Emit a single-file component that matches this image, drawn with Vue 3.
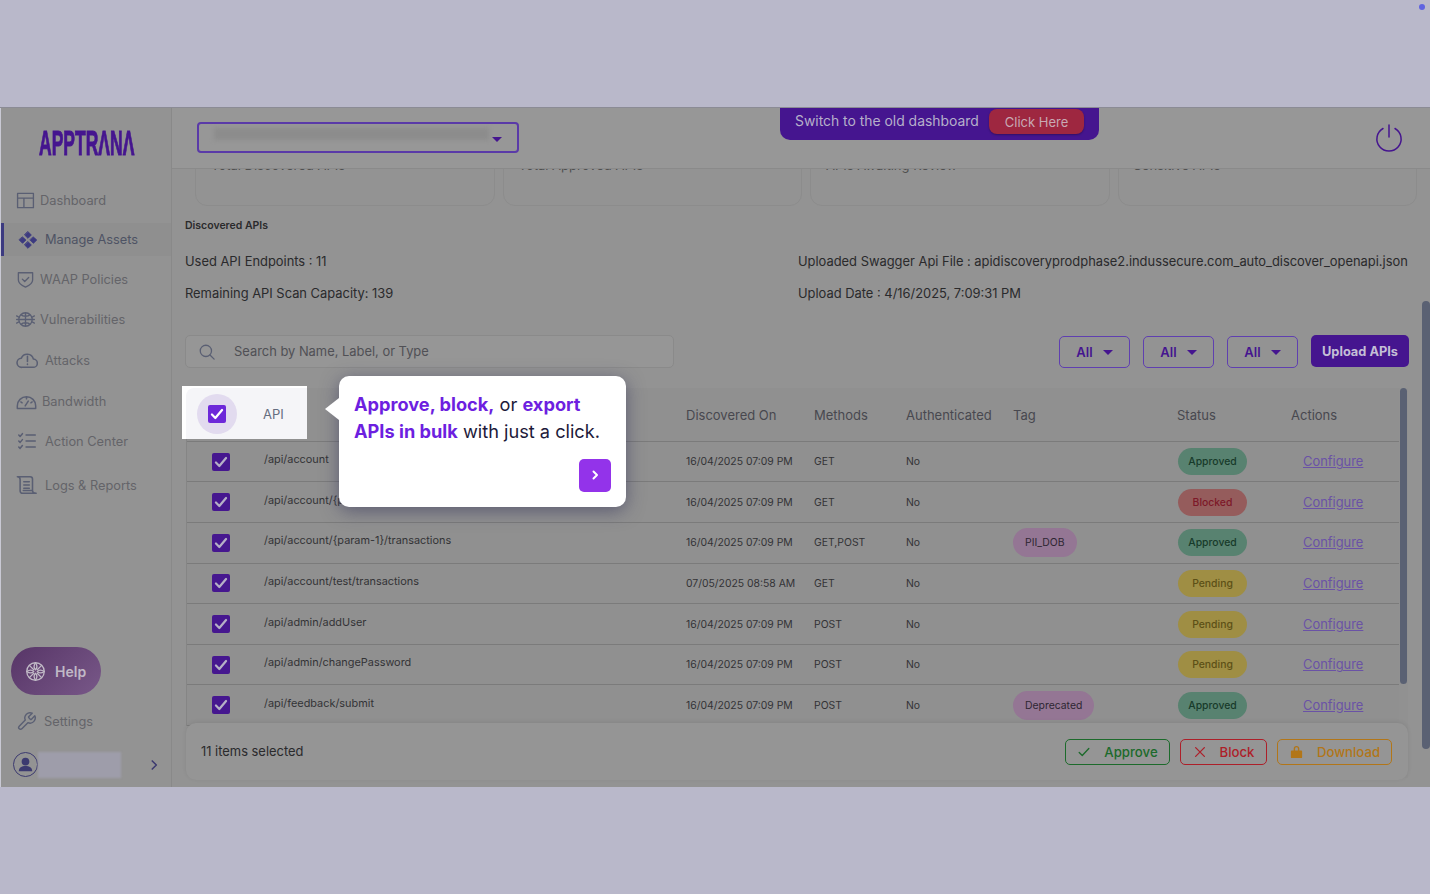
<template>
  <div class="page">
    <span class="dot"></span>
    <div class="band band-top"></div>

    <div class="app">
      <aside class="sidebar">
        <div class="logo" aria-label="APPTRANA">APPTR<span>Λ</span>N<span>Λ</span></div>

        <nav class="nav">
          <a v-for="item in navItems" :key="item.label" class="nav-item" :class="item.cls">
            <svg class="nav-icon" viewBox="0 0 24 24" fill="none" stroke="currentColor" stroke-width="1.7" stroke-linecap="round" stroke-linejoin="round">
              <path :d="item.icon" />
            </svg>
            {{ item.label }}
          </a>
        </nav>

        <button class="help">
          <svg viewBox="0 0 24 24" fill="none" stroke="currentColor" stroke-width="1.5" stroke-linecap="round" stroke-linejoin="round">
            <circle cx="12" cy="12" r="10" />
            <path d="M12 2c-2 3-2 6 0 8 2-2 2-5 0-8zM2 12c3-2 6-2 8 0-2 2-5 2-8 0zM22 12c-3-2-6-2-8 0 2 2 5 2 8 0zM12 22c-2-3-2-6 0-8 2 2 2 5 0 8z" />
            <path d="M5 5l5 5M19 5l-5 5M5 19l5-5M19 19l-5-5" />
          </svg>
          Help
        </button>

        <a class="settings">
          <svg viewBox="0 0 24 24" fill="none" stroke="currentColor" stroke-width="1.6" stroke-linecap="round" stroke-linejoin="round">
            <path d="M14.7 6.3a1 1 0 0 0 0 1.4l1.6 1.6a1 1 0 0 0 1.4 0l3.8-3.8a6 6 0 0 1-7.9 7.9l-6.9 6.9a2.1 2.1 0 0 1-3-3l6.9-6.9a6 6 0 0 1 7.9-7.9z" />
          </svg>
          Settings
        </a>

        <div class="profile">
          <span class="avatar">
            <svg viewBox="0 0 24 24" fill="currentColor">
              <circle cx="12" cy="9" r="4" />
              <path d="M5 19c0-4 3-5.5 7-5.5s7 1.5 7 5.5z" />
            </svg>
          </span>
          <span class="profile-name"></span>
          <svg class="profile-arrow" viewBox="0 0 24 24" fill="none" stroke="currentColor" stroke-width="2.6" stroke-linecap="round" stroke-linejoin="round">
            <path d="M9 5l7 7-7 7" />
          </svg>
        </div>
      </aside>

      <div class="right">
        <header class="topbar">
          <div class="org-select">
            <span class="blurred"></span>
            <span class="caret"></span>
          </div>
          <div class="old-banner">
            <span>Switch to the old dashboard</span>
            <button class="click-here">Click Here</button>
          </div>
          <svg class="power" viewBox="0 0 28 28" fill="none" stroke="currentColor" stroke-width="1.5" stroke-linecap="round">
            <path d="M14 1v12" />
            <path d="M8 4.500a12.100 12.100 0 1 0 12 0" />
          </svg>
        </header>

        <main class="main">
          <div class="cards">
            <div v-for="c in cards" :key="c" class="card"><span>{{ c }}</span></div>
          </div>

          <h4 class="section-title">Discovered APIs</h4>

          <div class="info">
            <span>Used API Endpoints : 11</span>
            <span>Uploaded Swagger Api File : apidiscoveryprodphase2.indussecure.com_auto_discover_openapi.json</span>
            <span>Remaining API Scan Capacity: 139</span>
            <span>Upload Date : 4/16/2025, 7:09:31 PM</span>
          </div>

          <div class="toolbar">
            <div class="search">
              <svg viewBox="0 0 24 24" fill="none" stroke="currentColor" stroke-width="1.7" stroke-linecap="round">
                <circle cx="10.5" cy="10.5" r="7.5" />
                <path d="M16 16l5.5 5.5" />
              </svg>
              Search by Name, Label, or Type
            </div>
            <div class="filters">
              <button v-for="n in 3" :key="n" class="filter">All <span class="caret"></span></button>
              <button class="upload">Upload APIs</button>
            </div>
          </div>

          <div class="table">
            <div class="row head">
              <span></span>
              <span></span>
              <span>Discovered On</span>
              <span>Methods</span>
              <span>Authenticated</span>
              <span>Tag</span>
              <span>Status</span>
              <span>Actions</span>
            </div>
            <div v-for="r in rows" :key="r.api" class="row">
              <span class="check dim">
                <svg viewBox="0 0 16 16" fill="none" stroke="currentColor" stroke-width="2" stroke-linecap="round" stroke-linejoin="round"><path d="M3.5 8.5l3 3 6-7" /></svg>
              </span>
              <span class="api">{{ r.api }}</span>
              <span>{{ r.date }}</span>
              <span>{{ r.method }}</span>
              <span>No</span>
              <span><em v-if="r.tag" class="tag">{{ r.tag }}</em></span>
              <span><em class="status" :class="r.status.toLowerCase()">{{ r.status }}</em></span>
              <span><a class="configure">Configure</a></span>
            </div>

            <div class="inner-track"><div class="inner-thumb"></div></div>

            <!-- tour spotlight over the first header cell -->
            <div class="spotlight">
              <div class="spot-inner">
                <span class="halo">
                  <span class="check">
                    <svg viewBox="0 0 16 16" fill="none" stroke="currentColor" stroke-width="2" stroke-linecap="round" stroke-linejoin="round"><path d="M3.5 8.5l3 3 6-7" /></svg>
                  </span>
                </span>
                <span class="spot-label">API</span>
              </div>
            </div>

            <div class="popover">
              <p><b>Approve, block,</b> or <b>export APIs in bulk</b> with just a click.</p>
              <button class="next">
                <svg viewBox="0 0 12 12" fill="none" stroke="currentColor" stroke-width="2" stroke-linecap="round" stroke-linejoin="round"><path d="M4.5 2.5L8 6l-3.5 3.5" /></svg>
              </button>
            </div>
          </div>

          <div class="bulk-bar">
            <span>11 items selected</span>
            <div class="bulk-actions">
              <button class="bulk approve">
                <svg viewBox="0 0 16 16" fill="none" stroke="currentColor" stroke-width="1.5" stroke-linecap="round" stroke-linejoin="round"><path d="M2.5 8.5l3.5 3.5 7.5-8" /></svg>
                Approve
              </button>
              <button class="bulk block">
                <svg viewBox="0 0 16 16" fill="none" stroke="currentColor" stroke-width="1.5" stroke-linecap="round"><path d="M3 3l10 10M13 3L3 13" /></svg>
                Block
              </button>
              <button class="bulk download">
                <svg viewBox="0 0 16 16" fill="currentColor"><path d="M3 7h10a1 1 0 0 1 1 1v6a1 1 0 0 1-1 1H3a1 1 0 0 1-1-1V8a1 1 0 0 1 1-1zm2 0V5a3 3 0 0 1 6 0v2H9.5V5a1.5 1.5 0 0 0-3 0v2z" /></svg>
                Download
              </button>
            </div>
          </div>

          <div class="outer-thumb"></div>
        </main>
      </div>
    </div>

    <div class="band band-bottom"></div>
  </div>
</template>

<script setup>
const navItems = [
  { label: 'Dashboard', cls: 'narrow', icon: 'M2 3h20v18H2zM2 9h20M10 9v12' },
  { label: 'Manage Assets', cls: 'active', icon: 'M12 2l4 4-4 4-4-4zM5.5 8.5l4 3.5-4 4-4-4zM18.5 8.5l4 3.5-4 4-4-4zM12 14l4 4-4 4-4-4z' },
  { label: 'WAAP Policies', cls: 'narrow', icon: 'M3 3.5c6 0 12 0 18 0v9c0 4.5-4.5 7-9 9-4.5-2-9-4.5-9-9zM8 11.5l3 3 5-5' },
  { label: 'Vulnerabilities', cls: 'narrow', icon: 'M12 3.5a8.5 8.5 0 0 1 8.5 8.5 8.5 8.5 0 0 1-17 0 8.5 8.5 0 0 1 8.5-8.5zM3.5 12h17M12 3.5v17M6.5 6c2 2.5 9 2.5 11 0M6.5 18c2-2.5 9-2.5 11 0M.8 7.5l3.5 2M23.2 7.5l-3.5 2M.8 16.5l3.5-2M23.2 16.5l-3.5-2M.8 12h2.7M20.5 12h2.7' },
  { label: 'Attacks', cls: 'wide attacks', icon: 'M6.5 20a5 5 0 0 1-.7-10 7 7 0 0 1 13.2 1 4.500 4.500 0 0 1-.5 9zM12.500 8v5.500M12.500 16.500v.3' },
  { label: 'Bandwidth', cls: 'mid', icon: 'M1.5 20v-3a10.500 10.500 0 0 1 21 0v3zM5.5 12.5l1.5 1M12 7.5v1.5M18.5 12.5l-1.5 1M10.5 17l3.5-5.5' },
  { label: 'Action Center', cls: 'wide', icon: 'M3 5.5l1.5 1.5L7 4M3 12l1.5 1.5L7 10.5M3 18.5l1.5 1.5L7 17M11 5.5h10M11 12h10M11 18.5h10' },
  { label: 'Logs & Reports', cls: 'wide logs', icon: 'M1.5 3h14a2.5 2.5 0 0 1 2.5 2.5V18M1.5 3c2 0 3 1 3 3v12.5c0 1.5 1.5 2.5 3 2.5h14.5c-2 0-4-1-4-3H8M8.5 8.5h6M8.5 12h6M8.5 15.5h6' },
]

const cards = ['Total Discovered APIs', 'Total Approved APIs', 'APIs Awaiting Review', 'Sensitive APIs']

const rows = [
  { api: '/api/account', date: '16/04/2025 07:09 PM', method: 'GET', status: 'Approved' },
  { api: '/api/account/{param-1}', date: '16/04/2025 07:09 PM', method: 'GET', status: 'Blocked' },
  { api: '/api/account/{param-1}/transactions', date: '16/04/2025 07:09 PM', method: 'GET,POST', tag: 'PII_DOB', status: 'Approved' },
  { api: '/api/account/test/transactions', date: '07/05/2025 08:58 AM', method: 'GET', status: 'Pending' },
  { api: '/api/admin/addUser', date: '16/04/2025 07:09 PM', method: 'POST', status: 'Pending' },
  { api: '/api/admin/changePassword', date: '16/04/2025 07:09 PM', method: 'POST', status: 'Pending' },
  { api: '/api/feedback/submit', date: '16/04/2025 07:09 PM', method: 'POST', tag: 'Deprecated', status: 'Approved' },
]
</script>

<style>
html, body {
  margin: 0;
  overflow: hidden;
}
</style>

<style scoped>
.page {
  position: relative;
  width: 1430px;
  height: 894px;
  display: flex;
  flex-direction: column;
  background: #b9b8ca;
  font-family: Inter, "Liberation Sans", sans-serif;
  color: #3a3a3c;
}
button {
  font-family: inherit;
  cursor: pointer;
}
.dot {
  position: absolute;
  top: 4px;
  right: 5px;
  width: 6px;
  height: 6px;
  border-radius: 50%;
  background: #5f63e0;
}
.band-top {
  height: 108px;
  border-bottom: 1px solid #8b8b95;
  box-sizing: border-box;
  flex: none;
}
.band-bottom {
  flex: 1;
}
.app {
  height: 679px;
  display: flex;
  background: #939393;
  border-left: 1px solid #c9c9d4;
}

/* sidebar */
.sidebar {
  width: 170px;
  flex: none;
  display: flex;
  flex-direction: column;
  border-right: 1px solid #898989;
}
.logo {
  height: 72px;
  width: 200px;
  margin-left: 38px;
  font-family: "Liberation Sans", sans-serif;
  font-size: 35px;
  font-weight: 700;
  line-height: 70px;
  color: #45158f;
  -webkit-text-stroke: 1px #45158f;
  transform: scaleX(.5);
  transform-origin: left center;
  white-space: nowrap;
}
.nav {
  display: flex;
  flex-direction: column;
}
.nav-item {
  height: 40px;
  display: flex;
  align-items: center;
  gap: 7px;
  padding-left: 15px;
  font-size: 12.8px;
  color: #646469;
  box-sizing: border-box;
}
.nav-icon {
  width: 20px;
  height: 20px;
  flex: none;
  color: #5a5f73;
}
.nav-item.narrow {
  gap: 5px;
}
.nav-item.narrow .nav-icon {
  width: 19px;
  height: 19px;
}
.nav-item.mid {
  margin-top: 1px;
}
.nav-item.mid .nav-icon {
  width: 21px;
  height: 21px;
  margin-right: -2px;
}
.nav-item.attacks {
  margin-top: 1px;
}
.nav-item.wide .nav-icon {
  width: 22px;
  height: 22px;
}
.nav-item.logs {
  margin-top: 4px;
}
.nav-item.active {
  height: 33px;
  margin: 3px 0 3px;
  padding-left: 14px;
  border-left: 3px solid #3c3a80;
  background: #8f8f8f;
  color: #4e5364;
}
.nav-item.active .nav-icon {
  color: #3c3a80;
  fill: currentColor;
  stroke-width: 1;
}
.help {
  align-self: flex-start;
  margin: auto 0 0 10px;
  width: 90px;
  height: 48px;
  display: flex;
  align-items: center;
  gap: 9px;
  padding: 0 0 0 14px;
  border: none;
  border-radius: 24px;
  background: linear-gradient(135deg, #573567, #785888);
  color: #c0b9c6;
  font-size: 14px;
  font-weight: 600;
}
.help svg {
  width: 21px;
  height: 21px;
}
.settings {
  margin: 15px 0 0 15px;
  display: flex;
  align-items: center;
  gap: 7px;
  height: 22px;
  font-size: 12.8px;
  color: #646469;
}
.settings svg {
  width: 21px;
  height: 21px;
  color: #5a5f73;
}
.profile {
  height: 27px;
  margin: 19px 0 9px 12px;
  display: flex;
  align-items: center;
}
.avatar {
  width: 25px;
  height: 25px;
  box-sizing: border-box;
  border: 1.5px solid #3c3a70;
  border-radius: 50%;
  color: #3c3a70;
  flex: none;
  display: flex;
}
.profile-name {
  width: 83px;
  height: 26px;
  background: #9e9daa;
  filter: blur(1px);
}
.profile-arrow {
  width: 14px;
  height: 14px;
  margin-left: 26px;
  color: #3c3a70;
}

/* top bar */
.right {
  flex: 1;
  min-width: 0;
  display: flex;
  flex-direction: column;
}
.topbar {
  height: 60px;
  flex: none;
  display: flex;
  align-items: flex-start;
  padding-left: 25px;
  background: #979797;
  border-bottom: 1px solid #8a8a8a;
}
.org-select {
  width: 322px;
  height: 31px;
  margin-top: 14px;
  box-sizing: border-box;
  border: 2px solid #5a3aa8;
  border-radius: 4px;
  display: flex;
  align-items: center;
  justify-content: space-between;
  padding: 0 15px;
}
.blurred {
  width: 275px;
  height: 12px;
  margin-top: -8px;
  background: #8c8c8c;
  filter: blur(2px);
}
.caret {
  display: inline-block;
  width: 0;
  height: 0;
  border-left: 5px solid transparent;
  border-right: 5px solid transparent;
  border-top: 5px solid #45158f;
}
.org-select .caret {
  margin-top: 3px;
}
.old-banner {
  margin-left: 261px;
  width: 319px;
  height: 32px;
  box-sizing: border-box;
  display: flex;
  align-items: flex-start;
  justify-content: space-between;
  padding: 0 15px;
  background: #45158f;
  border-radius: 0 0 10px 10px;
  color: #b6b0ca;
  font-size: 13.9px;
  line-height: 27px;
  white-space: nowrap;
}
.click-here {
  width: 95px;
  height: 25px;
  margin-top: 1px;
  padding: 0;
  border: none;
  border-radius: 8px;
  background: #9e2740;
  color: #c8aab4;
  font-size: 13px;
  box-shadow: 0 1px 2px rgba(0, 0, 0, .3);
}
.power {
  width: 28px;
  height: 28px;
  margin: 16px 0 0 276px;
  color: #45158f;
}

/* main */
.main {
  position: relative;
  flex: 1;
  overflow: hidden;
  background: #939393;
}
.cards {
  height: 37px;
  overflow: hidden;
  display: flex;
  align-items: flex-end;
  gap: 8px;
  margin-left: 23px;
  margin-right: 13px;
}
.card {
  flex: 1;
  height: 60px;
  box-sizing: border-box;
  padding: 10px 15px;
  border: 1px solid #8c8c8c;
  border-radius: 0 0 12px 12px;
  font-size: 13px;
  color: #505050;
}
.section-title {
  margin: 13px 0 0 13px;
  font-size: 10.5px;
  line-height: 13px;
  font-weight: 600;
  color: #2a2a2c;
}
.info {
  margin: 22px 22px 0 13px;
  display: grid;
  grid-template-columns: 613px 1fr;
  row-gap: 16px;
  font-size: 12.9px;
  line-height: 16px;
  color: #2a2a2c;
  white-space: nowrap;
}
.toolbar {
  margin: 33px 21px 0 13px;
  display: flex;
  justify-content: space-between;
}
.search {
  width: 489px;
  height: 33px;
  box-sizing: border-box;
  display: flex;
  align-items: center;
  gap: 11px;
  padding-left: 12px;
  border: 1px solid #8a8a8a;
  border-radius: 5px;
  background: #969696;
  font-size: 12.9px;
  color: #505055;
}
.search svg {
  width: 18px;
  height: 18px;
  margin-right: 7px;
  color: #5a5f73;
}
.filters {
  display: flex;
  gap: 13px;
}
.filter {
  width: 71px;
  height: 32px;
  margin-top: 1px;
  box-sizing: border-box;
  padding: 0;
  display: flex;
  align-items: center;
  justify-content: center;
  gap: 10px;
  background: transparent;
  border: 1.5px solid #5f3fb0;
  border-radius: 5px;
  color: #45158f;
  font-size: 13px;
  font-weight: 600;
}
.upload {
  width: 98px;
  height: 32px;
  padding: 0;
  border: none;
  border-radius: 5px;
  background: #45158f;
  color: #c4bfd6;
  font-size: 12.8px;
  font-weight: 700;
}

/* table */
.table {
  position: relative;
  margin: 20.4px 22px 0 14px;
  background: #909090;
  border-left: 1px solid #858585;
  font-size: 10.4px;
  color: #333336;
}
.row {
  display: grid;
  grid-template-columns: 77px 422px 128px 92px 107px 164px 114px 100px;
  align-items: center;
  height: 40.6px;
  box-sizing: border-box;
  border-bottom: 1px solid #7b7b7b;
  white-space: nowrap;
}
.row.head {
  height: 53.5px;
  font-size: 13px;
  color: #48484f;
}
.check {
  width: 18px;
  height: 18px;
  display: flex;
  margin-left: 25px;
  border-radius: 2px;
  background: #6d28d9;
  color: #fff;
}
.check.dim {
  background: #46178f;
  color: #b5b0c6;
}
.api {
  margin-bottom: 5px;
  font-size: 10.9px;
}
.row em {
  font-style: normal;
}
.tag {
  display: inline-block;
  height: 29px;
  line-height: 29px;
  padding: 0 12px;
  border-radius: 15px;
  background: #947694;
  color: #2e2632;
}
.status {
  display: block;
  width: 69px;
  height: 27px;
  line-height: 27px;
  margin-left: 1px;
  text-align: center;
  border-radius: 14px;
  font-weight: 500;
}
.status.approved {
  background: #588270;
  color: #173a2a;
}
.status.blocked {
  background: #955c5c;
  color: #7d1828;
}
.status.pending {
  background: #9f8e44;
  color: #5c5016;
}
.configure {
  margin-left: 12px;
  font-size: 12.9px;
  color: #6a52a6;
  text-decoration: underline;
}
.inner-track {
  position: absolute;
  top: 0;
  right: 0;
  width: 9px;
  height: 390px;
  background: #919191;
}
.inner-thumb {
  width: 7px;
  height: 296px;
  margin-left: 1px;
  border-radius: 4px;
  background: #5a6173;
}
.spotlight {
  position: absolute;
  left: -5px;
  top: -2px;
  width: 125px;
  height: 53px;
  padding: 2px 0 0 4px;
  box-sizing: border-box;
  background: #fff;
}
.spot-inner {
  height: 100%;
  display: flex;
  align-items: center;
  border-radius: 8px 0 0 0;
  background: #f5f5f8;
  font-size: 13px;
  color: #666d80;
}
.halo {
  width: 40px;
  height: 40px;
  margin-left: 11px;
  border-radius: 50%;
  background: #e2dbef;
  display: flex;
  align-items: center;
  justify-content: center;
}
.halo .check {
  margin: 0;
}
.spot-label {
  margin-left: 26px;
}
.popover {
  position: absolute;
  left: 152px;
  top: -12px;
  width: 287px;
  height: 131px;
  box-sizing: border-box;
  padding: 15px;
  display: flex;
  flex-direction: column;
  background: #fff;
  border-radius: 10px;
  box-shadow: 0 4px 18px rgba(50, 50, 90, .55);
  color: #1d1a3a;
}
.popover::before {
  content: "";
  position: absolute;
  left: -14px;
  top: 22px;
  border-top: 11px solid transparent;
  border-bottom: 11px solid transparent;
  border-right: 14px solid #fff;
}
.popover p {
  margin: 0;
  font-size: 18.2px;
  line-height: 27px;
}
.popover b {
  color: #6d1fe0;
  font-weight: 700;
}
.next {
  align-self: flex-end;
  margin-top: auto;
  width: 32px;
  height: 33px;
  flex: none;
  padding: 0;
  border: none;
  border-radius: 5px;
  background: #9333ea;
  color: #fff;
}
.next svg {
  width: 12px;
  height: 12px;
}

/* bottom bar */
.bulk-bar {
  position: absolute;
  left: 14px;
  right: 22px;
  bottom: 7px;
  height: 57px;
  box-sizing: border-box;
  display: flex;
  align-items: center;
  justify-content: space-between;
  padding: 0 16px 0 15px;
  background: #959595;
  border-radius: 10px;
  box-shadow: 0 -1px 4px rgba(0, 0, 0, .08);
  font-size: 12.9px;
  color: #2a2a2c;
}
.bulk-actions {
  display: flex;
  gap: 10px;
}
.bulk {
  height: 26px;
  box-sizing: border-box;
  padding: 0;
  display: flex;
  align-items: center;
  justify-content: center;
  gap: 13px;
  background: transparent;
  border: 1px solid currentColor;
  border-radius: 5px;
  font-size: 13.2px;
  font-weight: 500;
}
.bulk svg {
  width: 14px;
  height: 14px;
}
.approve {
  width: 105px;
  color: #1c6a2b;
}
.block {
  width: 87px;
  color: #ad1f29;
}
.download {
  width: 115px;
  color: #b27618;
}
.download svg {
  width: 15px;
  height: 15px;
}
.outer-thumb {
  position: absolute;
  top: 132px;
  right: 0;
  width: 8px;
  height: 448px;
  border-radius: 4px;
  background: #5a6173;
}
</style>
